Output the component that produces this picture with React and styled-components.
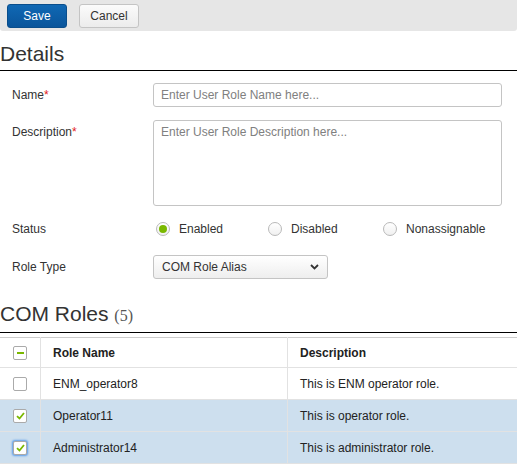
import React from "react";
import styled, { createGlobalStyle } from "styled-components";

const GlobalStyle = createGlobalStyle`
  body {
    margin: 0;
    font-family: "Liberation Sans", Arial, sans-serif;
    font-size: 12px;
    color: #333;
    background: #fff;
  }
`;

const Toolbar = styled.div`
  display: flex;
  align-items: center;
  gap: 12px;
  height: 31px;
  padding: 0 7px;
  background: #e6e6e6;
  border-radius: 0 0 3px 3px;
`;

const Button = styled.button`
  width: 60px;
  height: 24px;
  font-family: inherit;
  font-size: 12px;
  border-radius: 3px;
  cursor: pointer;
  border: 1px solid ${(p) => (p.primary ? "#0a4e8c" : "#c4c4c4")};
  color: ${(p) => (p.primary ? "#fff" : "#333")};
  background: ${(p) =>
    p.primary
      ? "linear-gradient(#1068b4, #0a559b)"
      : "linear-gradient(#fbfbfb, #ececec)"};
`;

const Heading = styled.h2`
  margin: ${(p) => p.top}px 0 0;
  padding: 0 0 4px;
  font-size: 21px;
  line-height: 25px;
  font-weight: normal;
  color: #333;
  border-bottom: 1px solid #000;
`;

const Count = styled.span`
  font-family: "Liberation Serif", "Times New Roman", serif;
  font-size: 16px;
  color: #555;
`;

const Form = styled.div`
  display: flex;
  flex-direction: column;
  padding: 12px 15px 0 12px;
`;

const Row = styled.div`
  display: flex;
  align-items: ${(p) => (p.top ? "flex-start" : "center")};
  min-height: ${(p) => p.h || 0}px;
  margin-bottom: ${(p) => p.gap}px;
`;

const Label = styled.div`
  width: 141px;
  flex: none;
  padding-top: ${(p) => (p.top ? 5 : 0)}px;
  color: #333;
`;

const Req = styled.span`
  color: #e32119;
`;

const TextInput = styled.input`
  box-sizing: border-box;
  width: 350px;
  height: 24px;
  padding: 0 7px;
  border: 1px solid #c4c4c4;
  border-radius: 3px;
  font-family: inherit;
  font-size: 12px;
  &::placeholder {
    color: #808080;
  }
`;

const TextArea = styled.textarea`
  box-sizing: border-box;
  width: 350px;
  height: 86px;
  padding: 4px 7px;
  border: 1px solid #c4c4c4;
  border-radius: 3px;
  font-family: inherit;
  font-size: 12px;
  resize: none;
  &::placeholder {
    color: #808080;
  }
`;

const RadioGroup = styled.div`
  display: flex;
  align-items: center;
  margin-left: 3px;
`;

const RadioOption = styled.label`
  display: flex;
  align-items: center;
  gap: 9px;
  width: ${(p) => p.w}px;
  color: #333;
`;

const RadioDot = styled.span`
  box-sizing: border-box;
  width: 14px;
  height: 14px;
  border-radius: 50%;
  border: 1px solid #b9b9b9;
  background: linear-gradient(#fff, #f0f0f0);
  display: flex;
  align-items: center;
  justify-content: center;
  &::after {
    content: "";
    width: 8px;
    height: 8px;
    border-radius: 50%;
    background: ${(p) => (p.checked ? "#7ab800" : "transparent")};
  }
`;

const Select = styled.div`
  box-sizing: border-box;
  width: 175px;
  height: 24px;
  display: flex;
  align-items: center;
  justify-content: space-between;
  padding: 0 8px 0 8px;
  border: 1px solid #c4c4c4;
  border-radius: 3px;
  background: linear-gradient(#fff, #eee);
  color: #333;
`;

const Table = styled.table`
  width: 100%;
  margin-top: 4px;
  border-collapse: collapse;
  border-top: 1px solid #ccc;
`;

const Th = styled.th`
  height: 29px;
  padding: 0 12px;
  text-align: left;
  font-weight: bold;
  color: #222;
  border-right: 1px solid #e2e2e2;
  border-bottom: 1px solid #e2e2e2;
  &:last-child {
    border-right: none;
  }
`;

const Tr = styled.tr`
  background: ${(p) => (p.selected ? "#cddfee" : "#fff")};
`;

const Td = styled.td`
  height: 31px;
  padding: 0 12px;
  color: #222;
  border-right: 1px solid #e2e2e2;
  border-bottom: 1px solid #e2e2e2;
  &:last-child {
    border-right: none;
  }
`;

const CheckCell = styled.td`
  width: 27px;
  padding: 0 0 0 13px;
  border-right: 1px solid #e2e2e2;
  border-bottom: 1px solid #e2e2e2;
`;

const CheckHead = styled(CheckCell).attrs({ as: "th" })`
  height: 29px;
`;

const Box = styled.span`
  box-sizing: border-box;
  width: 14px;
  height: 14px;
  display: flex;
  align-items: center;
  justify-content: center;
  border: 1px solid #aaa;
  border-radius: 2px;
  background: #fff;
  box-shadow: ${(p) => (p.focus ? "0 0 2px 1px #5b9dea" : "none")};
`;

const Check = () => (
  <svg width="9" height="8" viewBox="0 0 9 8">
    <path d="M1 4.2 L3.5 6.5 L8 1" fill="none" stroke="#7ab800" strokeWidth="1.8" />
  </svg>
);

const Dash = styled.span`
  width: 7px;
  height: 2px;
  background: #7ab800;
`;

const roles = [
  { name: "ENM_operator8", desc: "This is ENM operator role.", sel: false },
  { name: "Operator11", desc: "This is operator role.", sel: true },
  { name: "Administrator14", desc: "This is administrator role.", sel: true, focus: true },
];

export default function App() {
  return (
    <>
      <GlobalStyle />
      <Toolbar>
        <Button primary>Save</Button>
        <Button>Cancel</Button>
      </Toolbar>

      <Heading top={10}>Details</Heading>
      <Form>
        <Row gap={13}>
          <Label>
            Name<Req>*</Req>
          </Label>
          <TextInput placeholder="Enter User Role Name here..." />
        </Row>
        <Row top gap={13}>
          <Label top>
            Description<Req>*</Req>
          </Label>
          <TextArea placeholder="Enter User Role Description here..." />
        </Row>
        <Row gap={16} h={20}>
          <Label>Status</Label>
          <RadioGroup>
            <RadioOption w={112}>
              <RadioDot checked />
              Enabled
            </RadioOption>
            <RadioOption w={115}>
              <RadioDot />
              Disabled
            </RadioOption>
            <RadioOption w={120}>
              <RadioDot />
              Nonassignable
            </RadioOption>
          </RadioGroup>
        </Row>
        <Row gap={0}>
          <Label>Role Type</Label>
          <Select>
            COM Role Alias
            <svg width="9" height="6" viewBox="0 0 9 6">
              <path d="M1 1 L4.5 4.5 L8 1" fill="none" stroke="#333" strokeWidth="1.8" />
            </svg>
          </Select>
        </Row>
      </Form>

      <Heading top={22}>
        COM Roles <Count>(5)</Count>
      </Heading>
      <Table>
        <thead>
          <tr>
            <CheckHead>
              <Box>
                <Dash />
              </Box>
            </CheckHead>
            <Th style={{ width: 222 }}>Role Name</Th>
            <Th>Description</Th>
          </tr>
        </thead>
        <tbody>
          {roles.map((r) => (
            <Tr key={r.name} selected={r.sel}>
              <CheckCell>
                <Box focus={r.focus}>{r.sel && <Check />}</Box>
              </CheckCell>
              <Td>{r.name}</Td>
              <Td>{r.desc}</Td>
            </Tr>
          ))}
        </tbody>
      </Table>
    </>
  );
}
